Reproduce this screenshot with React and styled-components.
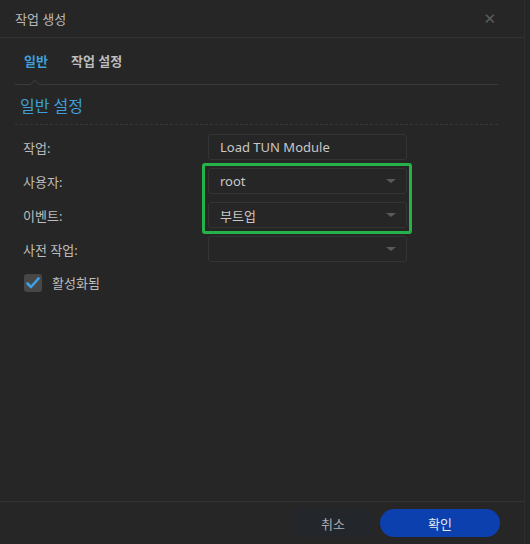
import React from 'react'
import styled, { createGlobalStyle } from 'styled-components'

const GlobalStyle = createGlobalStyle`
  body {
    margin: 0;
    background: #262626;
    font-family: "Noto Sans", "Noto Sans CJK KR", sans-serif;
  }
`

const Dialog = styled.div`
  width: 524px;
  height: 544px;
  background: #262626;
  border-right: 1px solid #2e2e2e;
  display: flex;
  flex-direction: column;
  color: #bdbdbd;
  font-size: 13px;
`

const Header = styled.header`
  height: 37px;
  padding: 0 28px 0 15px;
  border-bottom: 1px solid #323232;
  display: flex;
  align-items: center;
  justify-content: space-between;
  color: #bababa;
`

const Close = styled.span`
  color: #5c5c5c;
  font-size: 15px;
  font-weight: bold;
  font-family: "DejaVu Sans", sans-serif;
`

const Body = styled.main`
  flex: 1;
  padding: 0 26px 0 15px;
`

const Tabs = styled.nav`
  height: 45px;
  border-bottom: 1px solid #3a3a3a;
  display: flex;
  align-items: center;
  gap: 23px;
  padding: 0 0 1px 9px;
  position: relative;
`

const Tab = styled.span`
  font-weight: bold;
  color: ${p => (p.$active ? '#3f9fdb' : '#bdbdbd')};
`

const Notch = styled.span`
  position: absolute;
  left: 16px;
  bottom: -1px;
  width: 7px;
  height: 7px;
  background: #262626;
  border-left: 1px solid #3a3a3a;
  border-top: 1px solid #3a3a3a;
  transform: translateY(4px) rotate(45deg);
`

const SectionTitle = styled.h2`
  margin: 0;
  height: 39px;
  padding-left: 5px;
  display: flex;
  align-items: center;
  font-size: 16px;
  font-weight: normal;
  color: #3f9fdb;
  border-bottom: 1px dashed #363636;
`

const Form = styled.div`
  position: relative;
  display: flex;
  flex-direction: column;
  gap: 6px;
  padding: 8px 0 0 8px;
`

const Row = styled.div`
  display: grid;
  grid-template-columns: 185px 199px;
  align-items: center;
  height: 28px;
`

const Field = styled.div`
  height: 26px;
  box-sizing: border-box;
  border: 1px solid #343434;
  border-radius: 3px;
  background: #262626;
  display: flex;
  align-items: center;
  justify-content: space-between;
  padding: 0 10px 0 11px;
  color: #c8c8c8;
`

const Caret = styled.span`
  width: 0;
  height: 0;
  border-left: 5px solid transparent;
  border-right: 5px solid transparent;
  border-top: 4px solid #5a5a5a;
`

const Highlight = styled.div`
  position: absolute;
  left: 187px;
  top: 38px;
  width: 210px;
  height: 71px;
  box-sizing: border-box;
  border: 3px solid #26b24a;
  border-radius: 3px;
  pointer-events: none;
`

const CheckRow = styled.label`
  display: flex;
  align-items: center;
  gap: 10px;
  margin-top: 4px;
  margin-left: 1px;
`

const Box = styled.span`
  width: 18px;
  height: 18px;
  border-radius: 3px;
  background: #474747;
  display: flex;
  align-items: center;
  justify-content: center;
`

const Footer = styled.footer`
  height: 42px;
  border-top: 1px solid #333;
  display: flex;
  align-items: center;
  justify-content: flex-end;
  gap: 9px;
  padding: 0 24px 0 0;
`

const Button = styled.button`
  height: 28px;
  width: ${p => (p.$primary ? '120px' : '76px')};
  border: none;
  border-radius: ${p => (p.$primary ? '14px' : '3px')};
  background: ${p => (p.$primary ? '#0b40ae' : '#23272c')};
  color: ${p => (p.$primary ? '#e4e8f2' : '#a9acb0')};
  font-family: inherit;
  font-size: 13px;
`

const fields = [
  { label: '작업:', value: 'Load TUN Module' },
  { label: '사용자:', value: 'root', select: true },
  { label: '이벤트:', value: '부트업', select: true },
  { label: '사전 작업:', value: '', select: true }
]

const App = () => (
  <>
    <GlobalStyle />
    <Dialog>
      <Header>
        <span>작업 생성</span>
        <Close>✕</Close>
      </Header>
      <Body>
        <Tabs>
          <Tab $active>일반</Tab>
          <Tab>작업 설정</Tab>
          <Notch />
        </Tabs>
        <SectionTitle>일반 설정</SectionTitle>
        <Form>
          {fields.map(f => (
            <Row key={f.label}>
              <span>{f.label}</span>
              <Field>
                <span>{f.value}</span>
                {f.select && <Caret />}
              </Field>
            </Row>
          ))}
          <Highlight />
          <CheckRow>
            <Box>
              <svg width="14" height="12" viewBox="0 0 14 12">
                <path d="M1.5 6.5 L5 10 L12.5 1.5" fill="none" stroke="#3d9fe6" strokeWidth="2.6" strokeLinecap="round" strokeLinejoin="round" />
              </svg>
            </Box>
            <span>활성화됨</span>
          </CheckRow>
        </Form>
      </Body>
      <Footer>
        <Button>취소</Button>
        <Button $primary>확인</Button>
      </Footer>
    </Dialog>
  </>
)

export default App
